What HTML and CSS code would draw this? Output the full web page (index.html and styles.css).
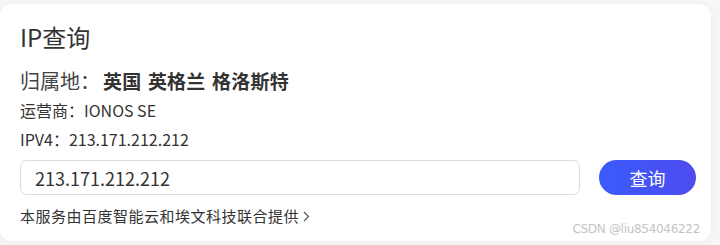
FILE: index.html
```html
<!DOCTYPE html>
<html lang="zh-CN">
<head>
    <meta charset="UTF-8">
    <meta name="viewport" content="width=device-width, initial-scale=1.0">
    <title>IP查询</title>
    <link rel="stylesheet" href="styles.css">
</head>
<body>

<div class="card">
    <h1 class="title">IP查询</h1>

    <div class="location">
        <span class="location-label">归属地：</span>
        <span class="location-value">英国 英格兰 格洛斯特</span>
    </div>
    <div class="info">运营商：IONOS SE</div>
    <div class="info info-ip">IPV4：213.171.212.212</div>

    <form class="query" id="ipForm">
        <input class="query-input" type="text" name="ip" value="213.171.212.212">
        <button class="query-btn" type="submit">查询</button>
    </form>

    <a class="provider" href="#">本服务由百度智能云和埃文科技联合提供
        <svg class="chevron" width="7" height="11" viewBox="0 0 7 11"><path d="M1 1l4.5 4.5L1 10" fill="none" stroke="#555" stroke-width="1.2"/></svg>
    </a>

    <div class="watermark">CSDN @liu854046222</div>
</div>

</body>
</html>
```

FILE: styles.css
```css
body {
    margin: 0;
    padding: 0;
    background-color: #f6f6f6;
    font-family: "Noto Sans CJK SC", "Noto Sans", sans-serif;
    color: #333;
    height: 245px;
    overflow: hidden;
}

.card {
    position: relative;
    margin: 4px 9px 0 0;
    height: 237px;
    box-sizing: border-box;
    padding: 17px 15px 0 20px;
    background-color: #fff;
    border-radius: 12px;
    box-shadow: 0 0 6px rgba(0, 0, 0, 0.04);
}

.title {
    margin: 0;
    font-size: 24px;
    line-height: 32px;
    font-weight: 400;
    color: #333;
}

.location {
    margin-top: 14px;
    line-height: 28px;
    display: flex;
    align-items: center;
}

.location-label {
    font-size: 20px;
    color: #444;
    width: 83px;
}

.location-value {
    font-size: 19px;
    font-weight: 700;
    color: #333;
    word-spacing: 2px;
    letter-spacing: 0.2px;
}

.info {
    margin-top: 3px;
    font-size: 16px;
    line-height: 24px;
    color: #333;
}

.info-ip {
    margin-top: 5px;
}

.query {
    margin: 9px 0 0;
    display: flex;
    gap: 19px;
}

.query-input {
    flex: 1;
    height: 35px;
    box-sizing: border-box;
    padding: 0 14px;
    border: 1px solid #dcdcdc;
    border-radius: 7px;
    font-family: inherit;
    font-size: 18px;
    color: #333;
    outline: none;
}

.query-btn {
    width: 97px;
    height: 35px;
    border: none;
    border-radius: 18px;
    background: linear-gradient(90deg, #3a5cfc, #4e4bf0);
    color: #fff;
    font-family: inherit;
    font-size: 18px;
    cursor: pointer;
}

.provider {
    display: inline-flex;
    align-items: center;
    gap: 4px;
    margin-top: 11px;
    font-size: 15px;
    line-height: 20px;
    letter-spacing: 0.5px;
    color: #333;
    text-decoration: none;
}

.watermark {
    position: absolute;
    right: 11px;
    bottom: 5px;
    font-family: "DejaVu Sans", sans-serif;
    font-size: 12px;
    color: #c4c4c4;
    letter-spacing: -0.3px;
}
```
